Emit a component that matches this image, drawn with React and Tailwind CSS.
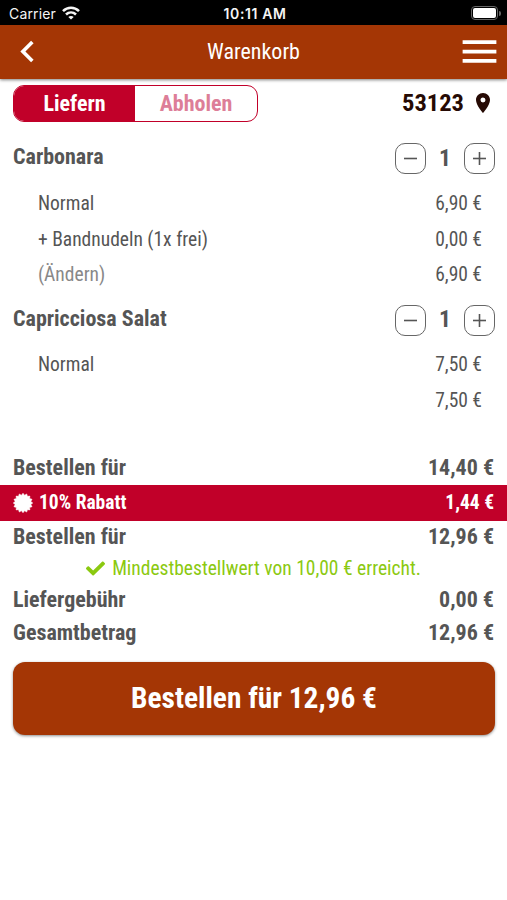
import { MdChevronLeft, MdLocationOn, MdMenu } from 'react-icons/md';
import { FaCheck } from 'react-icons/fa';

const items = [
  {
    name: 'Carbonara',
    count: 1,
    lines: [
      { label: 'Normal', price: '6,90 €' },
      { label: '+ Bandnudeln (1x frei)', price: '0,00 €' },
      { label: '(Ändern)', price: '6,90 €', muted: true },
    ],
  },
  {
    name: 'Capricciosa Salat',
    count: 1,
    lines: [
      { label: 'Normal', price: '7,50 €' },
      { label: '', price: '7,50 €' },
    ],
  },
];

function WifiIcon() {
  return (
    <svg viewBox="0 0 18 14" className="w-[18px] h-[14px]" fill="none" stroke="#f5f5f5" strokeWidth="2.6">
      <path d="M1 5.1C5.6.7 12.4.7 17 5.1" />
      <path d="M4 8.5c2.9-2.7 7.1-2.7 10 0" />
      <path d="M9 13.6 6.3 10.9c1.5-1.3 3.9-1.3 5.4 0z" fill="#f5f5f5" stroke="none" />
    </svg>
  );
}

function BadgeIcon() {
  const points = Array.from({ length: 32 }, (_, i) => {
    const r = i % 2 ? 8 : 9.8;
    const a = (i * Math.PI) / 16;
    return `${10 + r * Math.sin(a)},${10 - r * Math.cos(a)}`;
  }).join(' ');
  return (
    <svg viewBox="0 0 20 20" className="size-5" fill="#fff" stroke="#fff" strokeWidth="0.5" strokeLinejoin="round">
      <polygon points={points} />
    </svg>
  );
}

function StepButton({ plus }) {
  return (
    <button type="button" className="size-[31px] rounded-[10px] border border-[#666] flex items-center justify-center">
      <svg viewBox="0 0 13 13" className="size-[13px]" stroke="#555" strokeWidth="1.6">
        <path d="M0 6.5h13" />
        {plus && <path d="M6.5 0v13" />}
      </svg>
    </button>
  );
}

function SumRow({ label, price, className }) {
  return (
    <div className={`flex items-center justify-between px-[13px] text-[22px] font-bold ${className}`}>
      <span>{label}</span>
      <span>{price}</span>
    </div>
  );
}

export default function App() {
  return (
    <div className="w-[507px] h-[900px] bg-white overflow-hidden text-[#555] font-['Roboto_Condensed','Roboto',sans-serif] [font-stretch:75%]">
      <div className="h-[25px] bg-black text-[#f5f5f5] grid grid-cols-3 items-center pl-[9px] pr-1.5 pt-px font-['Inter',sans-serif] [font-stretch:100%]">
        <div className="flex items-center gap-1.5 text-[14px] tracking-[0.15px]">
          Carrier
          <WifiIcon />
        </div>
        <div className="text-center text-[14px] tracking-[0.6px] font-semibold">10:11 AM</div>
        <div className="flex items-center justify-end gap-px">
          <div className="w-[27px] h-[14px] rounded-[4px] border border-[#666] p-px">
            <div className="h-full rounded-[2px] bg-white" />
          </div>
          <div className="w-[2px] h-[5px] rounded-r bg-[#666]" />
        </div>
      </div>

      <header className="relative h-[54px] bg-[#a43605] text-white flex items-center justify-between pl-[6px] pr-[5px] pb-px shadow-[0_1px_3px_rgba(0,0,0,0.5)]">
        <MdChevronLeft className="size-[43px]" />
        <h1 className="text-[22px] pl-px">Warenkorb</h1>
        <MdMenu className="size-[45px]" />
      </header>

      <div className="h-[49px] flex items-center justify-between pl-[13px] pr-[12px]">
        <div className="w-[245px] h-[37px] flex rounded-[11px] border border-[#c10029] overflow-hidden text-[22px] font-bold">
          <button type="button" className="w-[121px] pb-px bg-[#c10029] text-white">Liefern</button>
          <button type="button" className="flex-1 pb-px text-[#dd7e98]">Abholen</button>
        </div>
        <div className="flex items-center gap-[7px] text-[24.5px] font-bold text-[#260a04]">
          53123
          <MdLocationOn className="size-6 mb-0.5" />
        </div>
      </div>

      <div className="pt-1">
        {items.map((item) => (
          <section key={item.name} className="mb-[1.5px]">
            <div className="h-[53.6px] flex items-center justify-between pl-[13px] pr-3 font-bold">
              <h2 className="text-[22px] pb-1">{item.name}</h2>
              <div className="flex items-center text-[23.5px]">
                <StepButton />
                <span className="w-[38px] text-center">{item.count}</span>
                <StepButton plus />
              </div>
            </div>
            {item.lines.map((line, i) => (
              <div key={i} className="h-[35.4px] pt-px flex items-center justify-between pl-[38px] pr-[25px] text-[19.5px]">
                <span className={line.muted ? 'text-[#888]' : ''}>{line.label}</span>
                <span>{line.price}</span>
              </div>
            ))}
          </section>
        ))}
      </div>

      <SumRow label="Bestellen für" price="14,40 €" className="mt-[33px] h-[34px]" />
      <div className="h-[36px] bg-[#c10029] text-white flex items-center px-[13px] text-[19.5px] font-bold">
        <BadgeIcon />
        <span className="ml-1.5">10% Rabatt</span>
        <span className="ml-auto">1,44 €</span>
      </div>
      <SumRow label="Bestellen für" price="12,96 €" className="h-[32px]" />
      <div className="h-[31px] flex items-center justify-center gap-[7px] text-[19.5px] text-[#8bc910]">
        <FaCheck className="size-[19px]" />
        Mindestbestellwert von 10,00 € erreicht.
      </div>
      <SumRow label="Liefergebühr" price="0,00 €" className="h-[31px]" />
      <SumRow label="Gesamtbetrag" price="12,96 €" className="h-[35px]" />

      <div className="pl-[13px] pr-3 pt-3">
        <button type="button" className="w-full h-[73px] rounded-[12px] bg-[#a43605] text-white text-[29.4px] font-bold shadow-[0_1px_3px_rgba(0,0,0,0.45)]">
          Bestellen für 12,96 €
        </button>
      </div>
    </div>
  );
}
